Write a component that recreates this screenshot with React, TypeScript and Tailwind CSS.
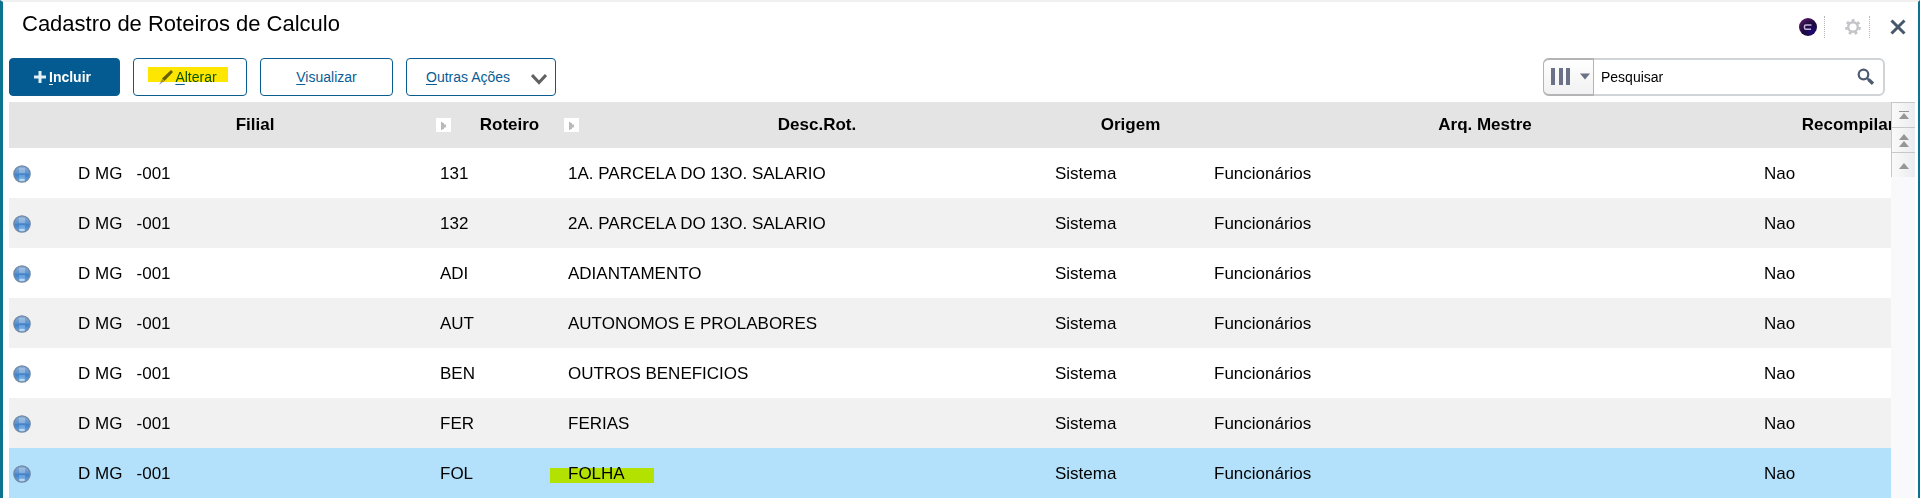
import type { ReactNode } from 'react';

type Roteiro = {
  filial: string;
  codigo: string;
  descricao: string;
  origem: string;
  arquivo: string;
  recompilar: string;
};

const base = {
  filial: 'D MG   -001',
  origem: 'Sistema',
  arquivo: 'Funcionários',
  recompilar: 'Nao',
};

const roteiros: Roteiro[] = [
  { ...base, codigo: '131', descricao: '1A. PARCELA DO 13O. SALARIO' },
  { ...base, codigo: '132', descricao: '2A. PARCELA DO 13O. SALARIO' },
  { ...base, codigo: 'ADI', descricao: 'ADIANTAMENTO' },
  { ...base, codigo: 'AUT', descricao: 'AUTONOMOS E PROLABORES' },
  { ...base, codigo: 'BEN', descricao: 'OUTROS BENEFICIOS' },
  { ...base, codigo: 'FER', descricao: 'FERIAS' },
  { ...base, codigo: 'FOL', descricao: 'FOLHA' },
];

const selected = 'FOL';

function StatusBall() {
  return (
    <svg width="18" height="18" viewBox="0 0 18 18" className="block" aria-hidden="true">
      <defs>
        <linearGradient id="ball" x1="0" y1="0" x2="0" y2="1">
          <stop offset="0" stopColor="#8fb2d8" />
          <stop offset="0.45" stopColor="#5b92cf" />
          <stop offset="0.55" stopColor="#3f80c8" />
          <stop offset="1" stopColor="#6fa9e0" />
        </linearGradient>
      </defs>
      <circle cx="9" cy="9" r="8.2" fill="url(#ball)" stroke="#7188a2" strokeWidth="1.2" />
      <path d="M6 3h6v5H6z" fill="#fff" opacity="0.25" />
      <path d="M6 10h6v5H6z" fill="#a9d4f8" opacity="0.35" />
      <ellipse cx="9" cy="15" rx="3" ry="1.2" fill="#d5ecff" opacity="0.7" />
    </svg>
  );
}

function SortMark() {
  return (
    <svg width="15" height="14" viewBox="0 0 15 14" className="block shrink-0" aria-hidden="true">
      <rect width="15" height="14" fill="#fff" />
      <path d="M5 4h1.5v1H8v1.500h2v3H8V11H6.500v1H5z" fill="#b9b9b9" />
    </svg>
  );
}

function ToolButton({ children, className }: { children: ReactNode; className: string }) {
  return (
    <button
      type="button"
      className={`relative flex h-[38px] items-center rounded border border-[#0a5c8f] text-sm ${className}`}
    >
      {children}
    </button>
  );
}

function ScrollButton({ label, children }: { label: string; children: ReactNode }) {
  return (
    <button
      type="button"
      aria-label={label}
      className="flex h-[25px] w-6 items-center justify-center border-t border-l border-[#c8c8c8] bg-linear-to-r from-[#fafafa] to-[#ebecef]"
    >
      <svg width="12" height="16" viewBox="0 0 12 16" fill="#969696" aria-hidden="true">
        {children}
      </svg>
    </button>
  );
}

function Header() {
  return (
    <header className="flex h-14 items-center justify-between pb-[6px] pl-[19px]">
      <h1 className="pb-[6px] text-[22px] leading-8">Cadastro de Roteiros de Calculo</h1>
      <div className="flex h-[22px] items-center pr-3">
        <button type="button" aria-label="Assistente">
          <svg width="18" height="18" viewBox="0 0 18 18" className="block">
            <defs>
              <radialGradient id="assist" cx="0.7" cy="0.75" r="0.9">
                <stop offset="0" stopColor="#1d0a7a" />
                <stop offset="0.5" stopColor="#1c0a3c" />
                <stop offset="1" stopColor="#5d1a6c" />
              </radialGradient>
            </defs>
            <circle cx="9" cy="9" r="9" fill="url(#assist)" />
            <path d="M12.500 7H6.800Q5.500 7 5.500 8.200V10q0 1.200 1.200 1.200h5.300" fill="none" stroke="#c9b4d8" strokeWidth="1.500" />
          </svg>
        </button>
        <div className="ml-[7px] h-full border-l border-dotted border-[#b5b5b5]" />
        <button type="button" aria-label="Configurações" className="ml-5">
          <svg width="16" height="16" viewBox="0 0 16 16" className="block" fill="none" stroke="#c3c5c9">
            <circle cx="8" cy="8" r="4.800" strokeWidth="2.400" />
            <circle cx="8" cy="8" r="6.600" strokeWidth="2.600" strokeDasharray="2.800 3.124" />
          </svg>
        </button>
        <div className="ml-2 h-full border-l border-dotted border-[#b5b5b5]" />
        <button type="button" aria-label="Fechar" className="ml-5">
          <svg width="16" height="16" viewBox="0 0 16 16" className="block" stroke="#48586b" strokeWidth="3">
            <path d="M1.500 1.500l13 13M14.500 1.500l-13 13" />
          </svg>
        </button>
      </div>
    </header>
  );
}

function SearchBox() {
  return (
    <form className="mr-[33px] ml-auto flex h-[38px] w-[342px] rounded-md border-2 border-[#d0d4d6] bg-white">
      <button
        type="button"
        aria-label="Colunas de pesquisa"
        className="-my-[2px] -ml-[2px] flex w-[51px] items-center rounded-l-md border-y-2 border-r border-l border-[#b4b4b4] bg-linear-to-b from-white to-[#f1f1f3] pl-[7px]"
      >
        <svg width="40" height="18" viewBox="0 0 40 18" fill="#6b7186">
          <path d="M0 0h4v17H0zM8 0h4v17H8zM15 0h4v17h-4zM29 5.500h10l-5 6z" />
        </svg>
      </button>
      <input
        type="text"
        aria-label="Pesquisar"
        defaultValue="Pesquisar"
        className="min-w-0 flex-1 bg-transparent pl-[7px] text-sm text-black outline-none"
      />
      <button type="submit" aria-label="Buscar" className="mr-2">
        <svg width="18" height="18" viewBox="0 0 18 18" className="block" fill="none" stroke="#4d5b70">
          <circle cx="6.500" cy="6.500" r="4.800" strokeWidth="2.200" />
          <path d="M10 10l2.500 2.500" strokeWidth="2" />
          <path d="M11.500 11.500l4.500 4.200" strokeWidth="3.400" />
        </svg>
      </button>
    </form>
  );
}

function Toolbar() {
  return (
    <div className="flex gap-[13px] pl-[6px] text-[#0a5c94]">
      <ToolButton className="w-[111px] justify-center bg-[#045b92] pr-1 font-bold text-white">
        <svg width="12" height="12" viewBox="0 0 12 12" className="mr-[3px]" aria-hidden="true">
          <path d="M6 0v12M0 6h12" stroke="#e4eef5" strokeWidth="3" />
        </svg>
        <span>
          <u className="underline-offset-2">I</u>ncluir
        </span>
      </ToolButton>
      <ToolButton className="w-[114px] justify-center bg-white pr-1">
        <svg width="14" height="15" viewBox="0 0 14 15" className="mr-[2px]" aria-hidden="true">
          <path d="M12 0l2 2-8.500 9L3 8.500z" fill="#666b73" />
          <path d="M3 9l2.300 2.200L0 15z" fill="#a3a6b5" />
        </svg>
        <span>
          <u className="underline-offset-2">A</u>lterar
        </span>
        <mark className="absolute top-2 left-[14px] h-[15px] w-20 bg-[#ffe600] mix-blend-multiply" />
      </ToolButton>
      <ToolButton className="w-[133px] justify-center bg-white">
        <span>
          <u className="underline-offset-2">V</u>isualizar
        </span>
      </ToolButton>
      <ToolButton className="w-[150px] justify-between bg-white pr-2 pl-[19px]">
        <span>
          <u className="underline-offset-2">O</u>utras Ações
        </span>
        <svg width="16" height="11" viewBox="0 0 16 11" className="mt-1" aria-hidden="true">
          <path d="M1 1l7 7.500L15 1" fill="none" stroke="#5f6163" strokeWidth="3" />
        </svg>
      </ToolButton>
      <SearchBox />
    </div>
  );
}

function RoteirosTable() {
  return (
    <table className="w-[1927px] table-fixed border-collapse text-[17px] text-black">
      <colgroup>
        <col className="w-[65px]" />
        <col className="w-[362px]" />
        <col className="w-[128px]" />
        <col className="w-[487px]" />
        <col className="w-[159px]" />
        <col className="w-[550px]" />
        <col className="w-[176px]" />
      </colgroup>
      <thead>
        <tr className="h-[46px] bg-[#e4e4e4]">
          <th aria-label="Status" />
          <th>Filial</th>
          <th>
            <div className="flex items-center">
              <SortMark />
              <span className="flex-1 pl-1">Roteiro</span>
            </div>
          </th>
          <th>
            <div className="flex items-center">
              <SortMark />
              <span className="flex-1 pl-1">Desc.Rot.</span>
            </div>
          </th>
          <th>Origem</th>
          <th>Arq. Mestre</th>
          <th>Recompilar</th>
        </tr>
      </thead>
      <tbody className="[&_td]:pt-px [&_td]:pl-1">
        {roteiros.map((r) => (
          <tr
            key={r.codigo}
            className={`h-[50px] ${r.codigo === selected ? 'bg-[#b3e1fc]' : 'odd:bg-white even:bg-[#f1f1f1]'}`}
          >
            <td>
              <StatusBall />
            </td>
            <td className="whitespace-pre">{r.filial}</td>
            <td>{r.codigo}</td>
            <td>
              {r.codigo === selected ? (
                <span className="relative">
                  {r.descricao}
                  <mark className="absolute top-1 -left-[18px] h-[15px] w-[104px] bg-[#ffff00] mix-blend-multiply" />
                </span>
              ) : (
                r.descricao
              )}
            </td>
            <td>{r.origem}</td>
            <td>{r.arquivo}</td>
            <td>{r.recompilar}</td>
          </tr>
        ))}
      </tbody>
    </table>
  );
}

export default function App() {
  return (
    <div className="min-h-screen border-t-2 border-r-2 border-l-[3px] border-t-[#f0f0f0] border-r-[#0b728f] border-l-[#0b728f] bg-white font-['Liberation_Sans',Arial,sans-serif] text-black">
      <Header />
      <Toolbar />
      <main className="mt-[6px] flex pr-[3px] pl-[6px]">
        <div className="min-w-0 flex-1 overflow-hidden">
          <RoteirosTable />
        </div>
        <div className="w-6 shrink-0 bg-[#f9f9fb]">
          <ScrollButton label="Primeiro registro">
            <path d="M1 4h10v1H1zM6 6l5 6H1z" />
          </ScrollButton>
          <ScrollButton label="Página anterior">
            <path d="M6 2l5 6H1zM6 9l5 6H1z" />
          </ScrollButton>
          <ScrollButton label="Registro anterior">
            <path d="M6 6l5 6H1z" />
          </ScrollButton>
        </div>
      </main>
    </div>
  );
}
